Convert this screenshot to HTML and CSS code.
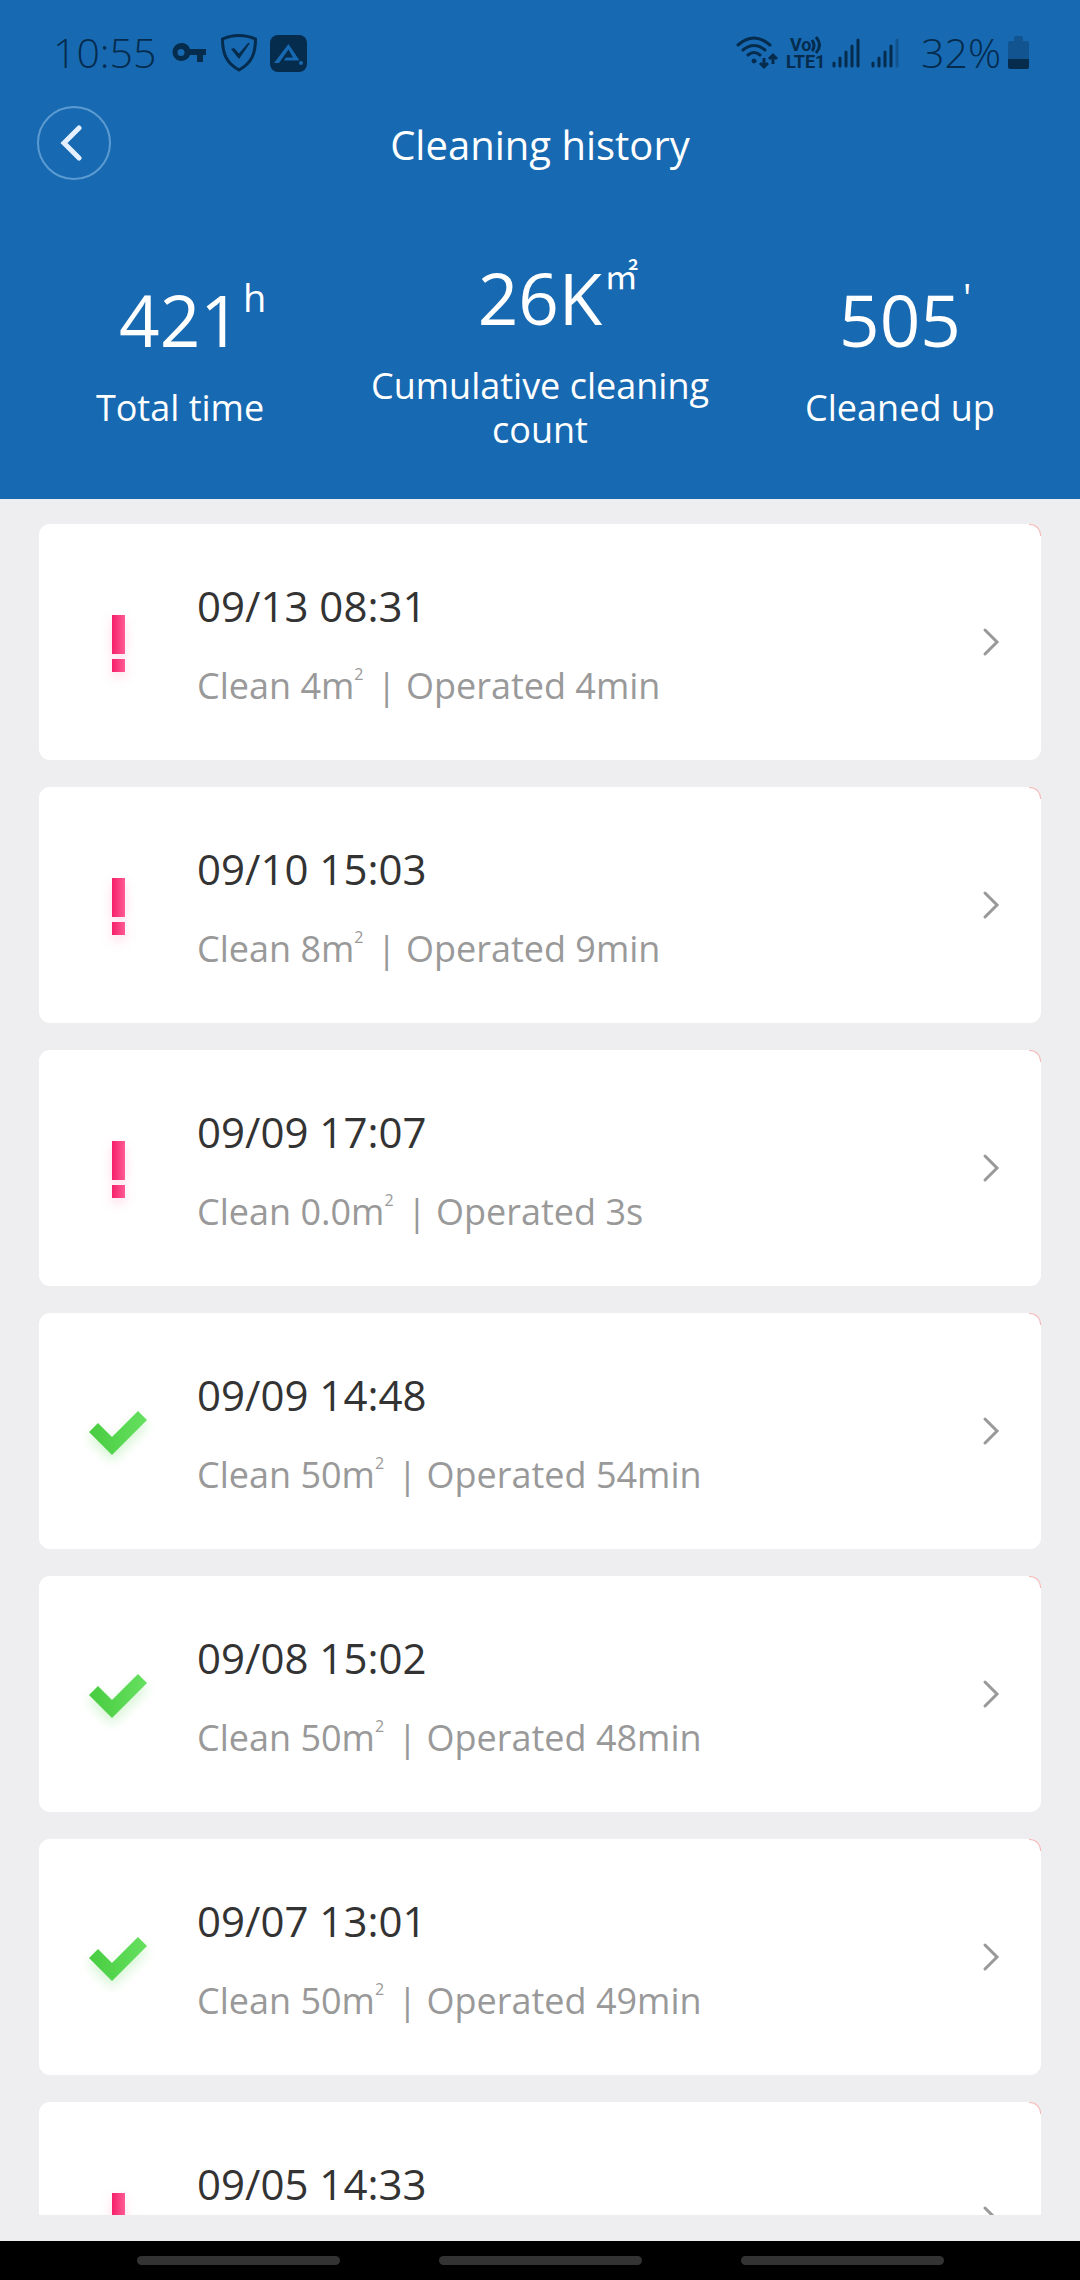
FILE: index.html
```html
<!DOCTYPE html>
<html lang="en">
<head>
    <meta charset="UTF-8">
    <meta name="viewport" content="width=device-width, initial-scale=1.0">
    <link rel="stylesheet" href="styles.css">
    <title>Cleaning history</title>
</head>
<body>
    <!-- shared icons -->
    <svg class="defs" width="0" height="0" aria-hidden="true">
        <defs>
            <linearGradient id="pink" x1="0" y1="0" x2="1" y2="0">
                <stop offset="0" stop-color="#f5206a"/>
                <stop offset="1" stop-color="#ff5a94"/>
            </linearGradient>
            <linearGradient id="green" x1="0" y1="0" x2="1" y2="0">
                <stop offset="0" stop-color="#48cc40"/>
                <stop offset="1" stop-color="#66e060"/>
            </linearGradient>
            <symbol id="fail" viewBox="0 0 80 80">
                <rect x="32" y="13" width="13" height="39" fill="url(#pink)"/>
                <rect x="32" y="57" width="13" height="13" fill="url(#pink)"/>
            </symbol>
            <symbol id="done" viewBox="0 0 80 80">
                <path d="M9 41l9-9 14 14 26-26 9 9-35 35z" fill="url(#green)"/>
            </symbol>
            <symbol id="next" viewBox="0 0 18 30">
                <path d="M3 3l12 12-12 12" fill="none" stroke="#999" stroke-width="3" stroke-linecap="round"/>
            </symbol>
        </defs>
    </svg>

    <header class="top">
        <div class="status">
            <div class="status-left">
                <span class="clock">10:55</span>
                <svg class="key" width="34" height="20" viewBox="0 0 34 20">
                    <path fill-rule="evenodd" d="M9 0a9 9 0 0 1 9 6h16v6h-3v7h-6v-7h-7A9 9 0 1 1 9 0zm0 6a3.500 3.500 0 1 0 0 7 3.500 3.500 0 0 0 0-7z"/>
                </svg>
                <svg class="shield" width="36" height="38" viewBox="0 0 36 38">
                    <path d="M18 1.500c6 0 11 1 16.500 3.500C34.500 19 31 29 18 36 5 29 1.500 19 1.500 5 7 2.500 12 1.500 18 1.500z" fill="none" stroke="#052b4d" stroke-width="3"/>
                    <path d="M10 15l3-1 5 5.500L27 9h2L18 25z"/>
                </svg>
                <svg class="app" width="37" height="37" viewBox="0 0 37 37">
                    <rect width="37" height="37" rx="8"/>
                    <path d="M4 28L18.500 9l11 16.500H14l2-3h7l-4.500-8L9 28z" fill="#1769b1"/>
                    <circle cx="31" cy="28" r="2" fill="#1769b1"/>
                </svg>
            </div>
            <div class="status-right">
                <svg width="42" height="34" viewBox="0 0 42 34" fill="none" stroke="#052b4d" stroke-width="3" stroke-linecap="round">
                    <path d="M2 9q16-14 32 0M7 14q11-9 22 0M12 19q6-5 12 0"/>
                    <circle cx="18" cy="25" r="2" fill="#052b4d" stroke-width="1"/>
                    <path d="M28 22v9M24 27l4 4 4-4M37 28v-9M33 23l4-4 4 4" stroke-linecap="butt"/>
                </svg>
                <svg width="42" height="44" viewBox="0 0 42 44" class="volte">
                    <text x="5" y="20">Vo</text>
                    <text x="1" y="37">LTE1</text>
                    <path d="M27 9q4 6 0 11M31 6q7 8 0 16" fill="none" stroke="#052b4d" stroke-width="3"/>
                </svg>
                <svg class="signal" width="28" height="32" viewBox="0 0 28 32" stroke="#052b4d" stroke-width="3" stroke-linecap="round">
                    <path d="M2 26v3M8 21v8M14 15v14M20 9v20M26 3v26"/>
                </svg>
                <svg class="signal-two" width="28" height="32" viewBox="0 0 28 32" stroke="#052b4d" stroke-width="3" stroke-linecap="round">
                    <path d="M2 26v3M8 21v8M14 15v14M20 9v20"/>
                    <path d="M26 3v26" stroke="#125490"/>
                </svg>
                <span class="battery-text">32%</span>
                <svg width="21" height="34" viewBox="0 0 21 34">
                    <path d="M6 2q0-2 2-2h5q2 0 2 2v3h4q2 0 2 2v16H0V7q0-2 2-2h4z" fill="#125490"/>
                    <path d="M0 23h21v8q0 2-2 2H2q-2 0-2-2z"/>
                </svg>
            </div>
        </div>

        <div class="title-bar">
            <button class="back" type="button" aria-label="Back">
                <svg width="24" height="36" viewBox="0 0 24 36">
                    <path d="M20 3L5 18l15 15" fill="none" stroke="#e4f0ff" stroke-width="5" stroke-linecap="round"/>
                </svg>
            </button>
            <h1>Cleaning history</h1>
        </div>

        <div class="stats">
            <div class="stat">
                <div class="value">421<span class="unit">h</span></div>
                <div class="label">Total time</div>
            </div>
            <div class="stat">
                <div class="value">26K<span class="unit area">㎡</span></div>
                <div class="label">Cumulative cleaning count</div>
            </div>
            <div class="stat">
                <div class="value">505<span class="unit">'</span></div>
                <div class="label">Cleaned up</div>
            </div>
        </div>
    </header>

    <main class="history">
        <a class="card" href="#">
            <svg class="state fail"><use href="#fail"/></svg>
            <div class="info">
                <div class="date">09/13 08:31</div>
                <div class="detail">Clean 4m<sup>2</sup> | Operated 4min</div>
            </div>
            <svg class="next"><use href="#next"/></svg>
        </a>
        <a class="card" href="#">
            <svg class="state fail"><use href="#fail"/></svg>
            <div class="info">
                <div class="date">09/10 15:03</div>
                <div class="detail">Clean 8m<sup>2</sup> | Operated 9min</div>
            </div>
            <svg class="next"><use href="#next"/></svg>
        </a>
        <a class="card" href="#">
            <svg class="state fail"><use href="#fail"/></svg>
            <div class="info">
                <div class="date">09/09 17:07</div>
                <div class="detail">Clean 0.0m<sup>2</sup> | Operated 3s</div>
            </div>
            <svg class="next"><use href="#next"/></svg>
        </a>
        <a class="card" href="#">
            <svg class="state done"><use href="#done"/></svg>
            <div class="info">
                <div class="date">09/09 14:48</div>
                <div class="detail">Clean 50m<sup>2</sup> | Operated 54min</div>
            </div>
            <svg class="next"><use href="#next"/></svg>
        </a>
        <a class="card" href="#">
            <svg class="state done"><use href="#done"/></svg>
            <div class="info">
                <div class="date">09/08 15:02</div>
                <div class="detail">Clean 50m<sup>2</sup> | Operated 48min</div>
            </div>
            <svg class="next"><use href="#next"/></svg>
        </a>
        <a class="card" href="#">
            <svg class="state done"><use href="#done"/></svg>
            <div class="info">
                <div class="date">09/07 13:01</div>
                <div class="detail">Clean 50m<sup>2</sup> | Operated 49min</div>
            </div>
            <svg class="next"><use href="#next"/></svg>
        </a>
        <a class="card" href="#">
            <svg class="state fail"><use href="#fail"/></svg>
            <div class="info">
                <div class="date">09/05 14:33</div>
            </div>
            <svg class="next"><use href="#next"/></svg>
        </a>
    </main>

    <nav class="gestures">
        <span></span>
        <span></span>
        <span></span>
    </nav>
</body>
</html>
```
FILE: styles.css
```css
* {
    box-sizing: border-box;
}

body {
    margin: 0;
    height: 100vh;
    display: flex;
    flex-direction: column;
    background-color: #eeeef0;
    font-family: "Open Sans", "Noto Sans", sans-serif;
    color: #333;
}

.defs {
    position: absolute;
}

/* blue header */
.top {
    flex: none;
    background-color: #1769b1;
    color: #fff;
    padding-bottom: 47px;
}

.status {
    display: flex;
    justify-content: space-between;
    align-items: center;
    height: 106px;
    padding: 0 51px 0 53px;
    color: #052b4d;
    fill: #052b4d;
    font-size: 41px;
    font-weight: 300;
}

.status-left,
.status-right {
    display: flex;
    align-items: center;
}

.clock,
.battery-text {
    line-height: 52px;
    padding-bottom: 2px;
}

.key {
    margin-left: 16px;
}

.shield {
    margin-left: 15px;
}

.app {
    margin-left: 13px;
}

.volte {
    margin-left: 7px;
    font-family: Roboto, sans-serif;
    font-size: 18px;
    font-weight: 700;
}

.signal {
    margin-left: 5px;
}

.signal-two {
    margin-left: 11px;
}

.battery-text {
    margin: 0 7px 0 22px;
}

.title-bar {
    display: grid;
    grid-template-columns: 74px 1fr 74px;
    align-items: center;
    padding: 0 37px;
}

.back {
    display: flex;
    align-items: center;
    justify-content: center;
    width: 74px;
    height: 74px;
    padding: 0 6px 0 0;
    border: 2px solid #5c9bd1;
    border-radius: 50%;
    background: none;
    cursor: pointer;
}

h1 {
    margin: 0;
    padding-top: 4px;
    text-align: center;
    font-size: 40px;
    font-weight: 400;
    line-height: 44px;
}

.stats {
    display: grid;
    grid-template-columns: repeat(3, 1fr);
    align-items: center;
    margin-top: 73px;
    text-align: center;
}

.value {
    position: relative;
    width: max-content;
    margin: 0 auto;
    font-size: 71px;
    line-height: 90px;
}

.unit {
    position: absolute;
    left: 100%;
    top: 0;
    margin-left: 2px;
    font-size: 38px;
    line-height: 44px;
}

.area {
    font-family: "Noto Sans CJK KR", sans-serif;
    font-size: 34px;
}

.label {
    margin-top: 21px;
    font-size: 36px;
    line-height: 44px;
}

/* list of runs */
.history {
    flex: 1;
    min-height: 0;
    overflow: hidden;
    display: flex;
    flex-direction: column;
    gap: 27px;
    padding: 25px 39px 0;
    margin-bottom: 26px;
}

.card {
    position: relative;
    flex: none;
    display: flex;
    align-items: center;
    height: 236px;
    padding: 0 41px;
    border-radius: 11px;
    background-color: #fff;
    color: inherit;
    text-decoration: none;
}

.card::after {
    content: "";
    position: absolute;
    top: 0;
    right: 0;
    width: 11px;
    height: 11px;
    border: 1px solid #f3b9b9;
    border-width: 1px 1px 0 0;
    border-top-right-radius: 11px;
}

.state {
    width: 80px;
    height: 80px;
}

.fail {
    filter: drop-shadow(0 5px 6px rgba(255, 80, 140, 0.2));
}

.done {
    filter: drop-shadow(0 6px 6px rgba(80, 210, 70, 0.25));
}

.info {
    flex: 1;
    height: 132px;
    margin-left: 37px;
}

.date {
    font-size: 42px;
    line-height: 60px;
}

.detail {
    margin-top: 24px;
    color: #999;
    font-size: 36px;
    line-height: 52px;
}

sup {
    margin-right: 4px;
    font-size: 16px;
    line-height: 0;
    vertical-align: 19px;
}

.next {
    width: 18px;
    height: 30px;
}

/* bottom gesture bar */
.gestures {
    flex: none;
    display: flex;
    justify-content: center;
    align-items: center;
    gap: 99px;
    height: 39px;
    background-color: #000;
}

.gestures span {
    width: 203px;
    height: 9px;
    border-radius: 5px;
    background-color: #333;
}
```
